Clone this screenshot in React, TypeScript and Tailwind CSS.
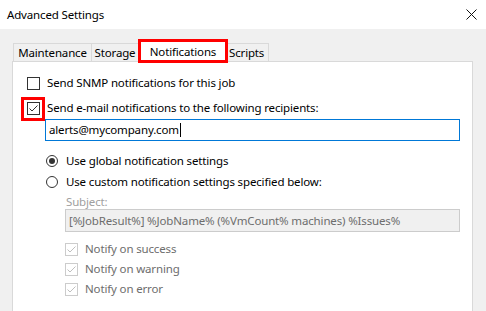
import React from 'react';

function CheckBox({ checked, disabled }: { checked?: boolean; disabled?: boolean }) {
  return (
    <span
      className={`flex h-[13px] w-[13px] shrink-0 items-center justify-center border bg-white ${
        disabled ? 'border-[#cccccc]' : 'border-[#333333]'
      }`}
    >
      {checked && (
        <svg width="11" height="11" viewBox="0 0 11 11" fill="none">
          <path
            d="M1.5 5.5 L4 8 L9.5 2.5"
            stroke={disabled ? '#bfbfbf' : '#333333'}
            strokeWidth="1"
          />
        </svg>
      )}
    </span>
  );
}

function Radio({ checked }: { checked?: boolean }) {
  return (
    <span className="flex h-[12px] w-[12px] shrink-0 items-center justify-center rounded-full border border-[#333333] bg-white">
      {checked && <span className="h-[6px] w-[6px] rounded-full bg-[#333333]" />}
    </span>
  );
}

export default function App() {
  return (
    <div className="h-[311px] w-[486px] overflow-hidden bg-[#f0f0f0] font-['Segoe_UI','Noto_Sans',sans-serif] text-[11.5px] leading-[14px] tracking-[-0.15px] text-black">
      <div className="flex h-[29px] items-center justify-between bg-white pl-[7px] pr-[9px]">
        <span>Advanced Settings</span>
        <svg width="11" height="11" viewBox="0 0 11 11" fill="none">
          <path d="M0.5 0.5 L10.5 10.5 M10.5 0.5 L0.5 10.5" stroke="#111" strokeWidth="1" />
        </svg>
      </div>

      <div className="pl-[12px] pr-[13px] pt-[12px]">
        <div className="relative flex h-[20px] items-end pl-[1px]">
          <div className="flex h-[18px] w-[79px] items-center justify-center border border-b-0 border-[#d9d9d9]">
            Maintenance
          </div>
          <div className="flex h-[18px] w-[47px] items-center justify-center border border-b-0 border-l-0 border-[#d9d9d9]">
            Storage
          </div>
          <div className="relative z-10 -mb-[1px] flex h-[21px] w-[89px] items-center justify-center border border-b-0 border-l-0 border-[#d9d9d9] bg-white">
            Notifications
          </div>
          <div className="flex h-[18px] w-[41px] items-center justify-start border border-b-0 border-l-0 border-[#d9d9d9] pl-[1px]">
            Scripts
          </div>
          <div className="pointer-events-none absolute left-[126px] top-[-2px] z-20 h-[24px] w-[90px] border-[3px] border-[#ff0000]" />
        </div>

        <div className="h-[260px] border border-[#d9d9d9] bg-white pl-[14px] pt-[11px]">
          <div className="flex h-[20px] items-center gap-[7px]">
            <CheckBox />
            <span>Send SNMP notifications for this job</span>
          </div>

          <div className="relative mt-[5px] flex h-[20px] items-center gap-[7px]">
            <CheckBox checked />
            <span>Send e-mail notifications to the following recipients:</span>
            <div className="pointer-events-none absolute left-[-6px] top-[-1px] h-[24px] w-[24px] border-[3px] border-[#ff0000]" />
          </div>

          <div className="ml-[18px] mt-[1px] flex h-[22px] w-[415px] items-center border border-[#0078d7] pl-[3px]">
            <span>alerts@mycompany.com</span>
            <span className="ml-[1px] h-[14px] w-[1px] bg-black" />
          </div>

          <div className="ml-[19px] mt-[10px] flex h-[20px] items-center gap-[8px]">
            <Radio checked />
            <span>Use global notification settings</span>
          </div>
          <div className="ml-[19px] mt-[1px] flex h-[20px] items-center gap-[8px]">
            <Radio />
            <span>Use custom notification settings specified below:</span>
          </div>

          <div className="ml-[39px] mt-[3px] h-[14px] text-[#a0a0a0]">Subject:</div>
          <div className="ml-[38px] flex h-[23px] w-[395px] items-center border border-[#cccccc] bg-[#f0f0f0] pl-[3px] text-[#6d6d6d]">
            [%JobResult%] %JobName% (%VmCount% machines) %Issues%
          </div>

          <div className="ml-[38px] mt-[7px] flex flex-col">
            {['Notify on success', 'Notify on warning', 'Notify on error'].map((label) => (
              <div key={label} className="flex h-[20px] items-center gap-[7px] text-[#6d6d6d]">
                <CheckBox checked disabled />
                <span>{label}</span>
              </div>
            ))}
          </div>
        </div>
      </div>
    </div>
  );
}
